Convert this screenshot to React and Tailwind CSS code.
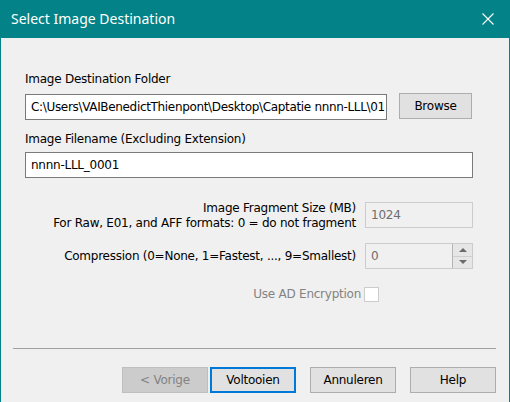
export default function App() {
  return (
    <div className="w-[510px] h-[402px] bg-[#f0f0f0] border-x border-[#038387] overflow-hidden text-black font-['DejaVu_Sans',sans-serif] text-[12px] tracking-[-0.25px] leading-[16px]">
      <div className="h-[38px] bg-[#038387] flex items-center justify-between pl-[10px] pr-[15px]">
        <span className="font-['Noto_Sans',sans-serif] text-[14px] tracking-normal text-white leading-[20px]">Select Image Destination</span>
        <svg width="12" height="12" viewBox="0 0 12 12">
          <path d="M0.5 0.5 L11.5 11.5 M11.5 0.5 L0.5 11.5" stroke="white" strokeWidth="1.1" fill="none" />
        </svg>
      </div>

      <div className="pl-[24px] pr-[36px]">
        <div className="mt-[33px]">Image Destination Folder</div>
        <div className="mt-[6px] flex items-start">
          <div className="mt-px w-[362px] h-[26px] bg-white border border-[#7a7a7a] pl-[5px] flex items-center overflow-hidden whitespace-nowrap tracking-[-0.33px]">
            C:\Users\VAIBenedictThienpont\Desktop\Captatie nnnn-LLL\01
          </div>
          <div className="ml-[12px] w-[73px] h-[26px] bg-[#e1e1e1] border border-[#adadad] flex items-center justify-center">
            Browse
          </div>
        </div>

        <div className="mt-[11px]">Image Filename (Excluding Extension)</div>
        <div className="mt-[5px] w-[448px] h-[26px] bg-white border border-[#7a7a7a] pl-[5px] flex items-center">
          nnnn-LLL_0001
        </div>

        <div className="mt-[23px] flex justify-end items-start">
          <div className="text-right leading-[15px]">
            <div>Image Fragment Size (MB)</div>
            <div>For Raw, E01, and AFF formats: 0 = do not fragment</div>
          </div>
          <div className="ml-[9px] mt-px w-[108px] h-[26px] border border-[#cccccc] bg-[#f0f0f0] pl-[5px] flex items-center text-[#6d6d6d]">
            1024
          </div>
        </div>

        <div className="mt-[12px] flex justify-end items-center">
          <div className="text-right">Compression (0=None, 1=Fastest, ..., 9=Smallest)</div>
          <div className="ml-[9px] w-[108px] h-[26px] border border-[#cccccc] bg-[#f0f0f0] flex">
            <div className="flex-1 pl-[5px] flex items-center text-[#6d6d6d]">0</div>
            <div className="w-[20px] flex flex-col border-l border-[#b5b5b5]">
              <div className="flex-1 bg-[#e6e6e6] border-b border-[#cfcfcf] flex items-center justify-center">
                <svg width="8" height="4" viewBox="0 0 8 4"><path d="M0 4 L4 0 L8 4 Z" fill="#6a6a6a" /></svg>
              </div>
              <div className="flex-1 bg-[#e6e6e6] flex items-center justify-center">
                <svg width="8" height="4" viewBox="0 0 8 4"><path d="M0 0 L8 0 L4 4 Z" fill="#6a6a6a" /></svg>
              </div>
            </div>
          </div>
        </div>

        <div className="mt-[17px] flex justify-end items-center mr-[94px]">
          <span className="text-[#838383]">Use AD Encryption</span>
          <div className="ml-[3px] w-[15px] h-[15px] bg-white border border-[#cccccc]" />
        </div>
      </div>

      <div className="mt-[46px] ml-[12px] mr-[13px] h-px bg-[#a0a0a0]" />

      <div className="mt-[18px] pr-[13px] flex justify-end">
        <div className="w-[86px] h-[26px] bg-[#cccccc] border border-[#bfbfbf] text-[#838383] flex items-center justify-center">
          &lt; Vorige
        </div>
        <div className="ml-[2px] w-[86px] h-[26px] bg-[#e1e1e1] border-2 border-[#0078d7] flex items-center justify-center">
          Voltooien
        </div>
        <div className="ml-[14px] w-[86px] h-[26px] bg-[#e1e1e1] border border-[#adadad] flex items-center justify-center">
          Annuleren
        </div>
        <div className="ml-[14px] w-[86px] h-[26px] bg-[#e1e1e1] border border-[#adadad] flex items-center justify-center">
          Help
        </div>
      </div>
    </div>
  );
}
